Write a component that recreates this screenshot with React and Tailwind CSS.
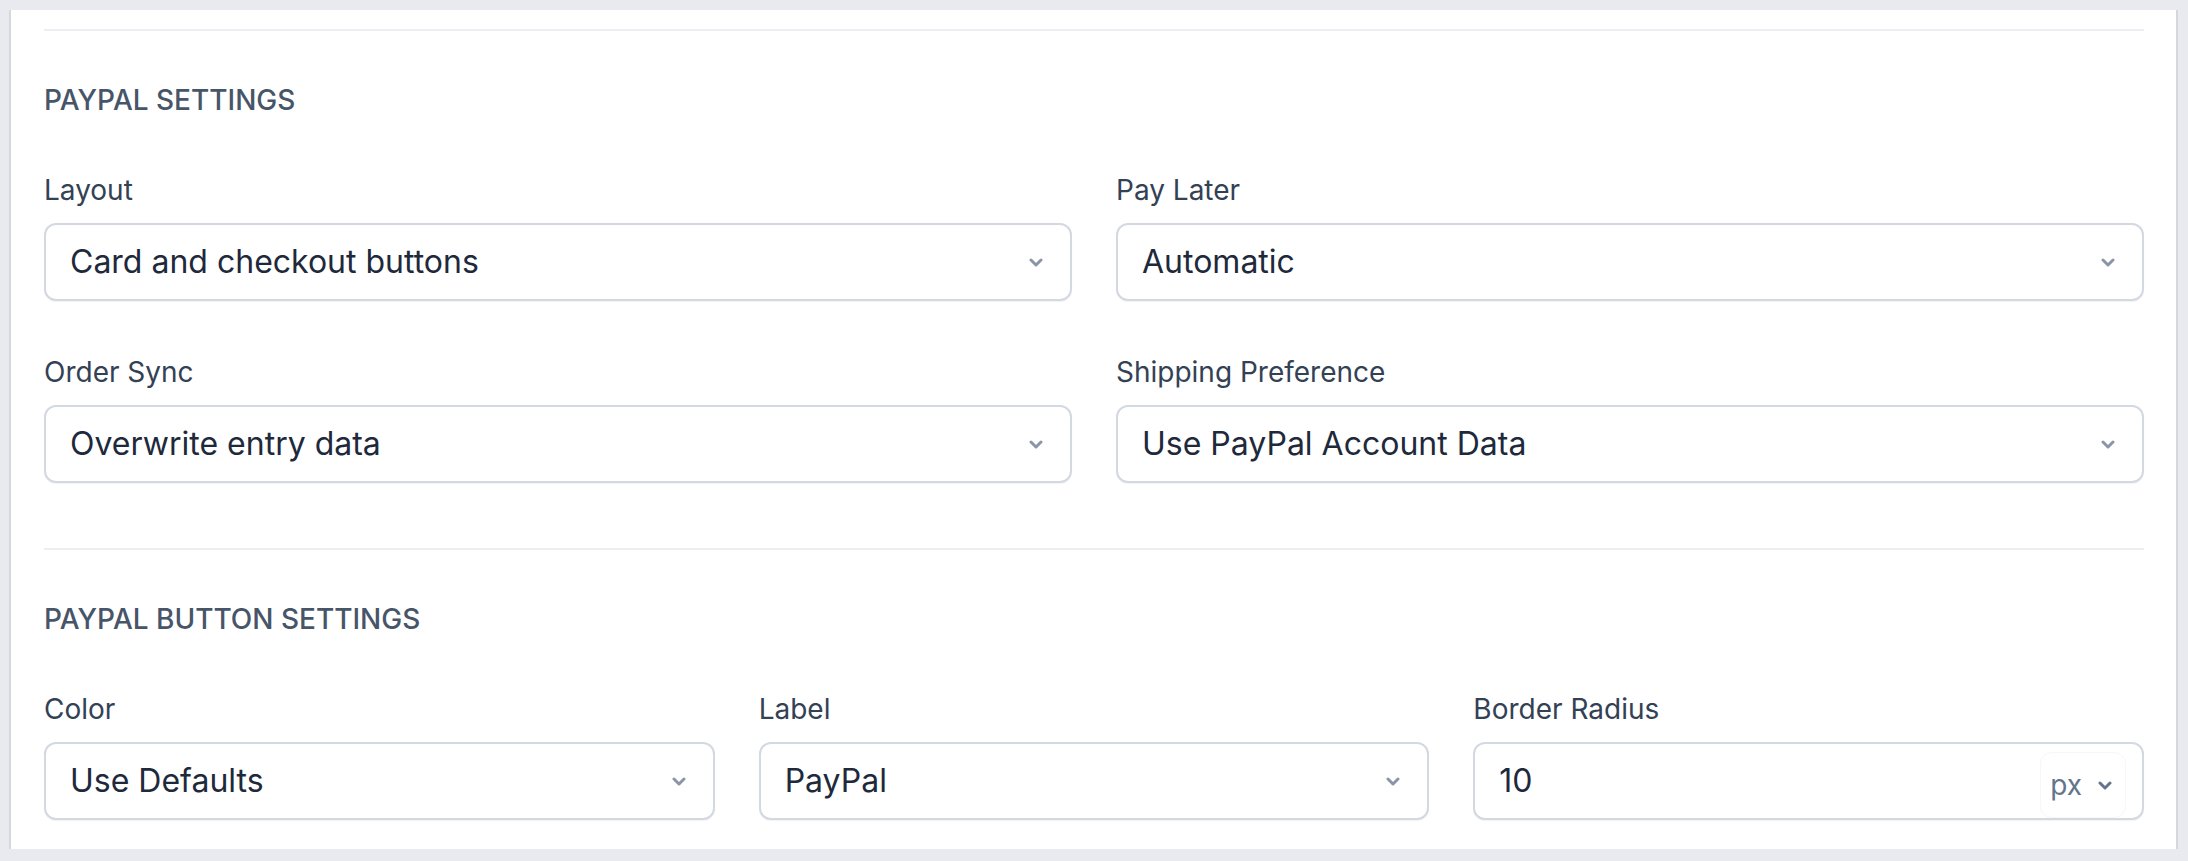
import React from "react";

// Small chevron used by every select
const Chevron = ({ className = "text-[#8b95a7]" }) => (
  <svg
    className={`w-[14px] h-[9px] shrink-0 ${className}`}
    viewBox="0 0 14 9"
    fill="none"
    stroke="currentColor"
    strokeWidth={3}
    strokeLinecap="round"
    strokeLinejoin="round"
  >
    <path d="M2 2l5 5 5-5" />
  </svg>
);

const Field = ({ label, value, unit }) => (
  <div className="flex flex-col">
    <label className="text-[28px] leading-[40px] text-[#334155]">{label}</label>
    <div className="mt-[13px] h-[78px] flex items-center rounded-[12px] border-2 border-[#d3d8e1] bg-white pl-[24px] pr-[27px] shadow-[0_1px_1px_rgba(15,23,42,0.05)]">
      <span className="flex-1 text-[32px] text-[#1e293b] truncate">{value}</span>
      {unit ? (
        <div className="self-end -mr-[11px] h-[66px] flex items-center gap-[16px] rounded-[12px] border border-[#f6f7f9] pl-[9px] pr-[13px]">
          <span className="text-[28px] text-[#64748b]">{unit}</span>
          <Chevron className="text-[#64748b]" />
        </div>
      ) : (
        <Chevron />
      )}
    </div>
  </div>
);

const SectionTitle = ({ children }) => (
  <h2 className="mt-[49px] text-[28px] leading-[40px] font-medium text-[#475569] uppercase">
    {children}
  </h2>
);

export default function App() {
  return (
    <div
      className="min-h-screen bg-[#e9eaef] pt-[10px] pb-[10px] pl-[9px] pr-[10px]"
      style={{ fontFamily: "Inter, 'Noto Sans', sans-serif" }}
    >
      <div className="bg-white border-x-2 border-[#d5d7de] pl-[33px] pr-[32px] pt-[19px] pb-[29px]">
        {/* PayPal settings */}
        <div className="h-[2px] bg-[#eceef2]" />
        <SectionTitle>PayPal Settings</SectionTitle>
        <div className="mt-[50px] grid grid-cols-2 gap-x-[44px] gap-y-[51px]">
          <Field label="Layout" value="Card and checkout buttons" />
          <Field label="Pay Later" value="Automatic" />
          <Field label="Order Sync" value="Overwrite entry data" />
          <Field label="Shipping Preference" value="Use PayPal Account Data" />
        </div>

        {/* PayPal button settings */}
        <div className="mt-[65px] h-[2px] bg-[#eceef2]" />
        <SectionTitle>PayPal Button Settings</SectionTitle>
        <div className="mt-[50px] grid grid-cols-3 gap-x-[44px]">
          <Field label="Color" value="Use Defaults" />
          <Field label="Label" value="PayPal" />
          <Field label="Border Radius" value="10" unit="px" />
        </div>
      </div>
    </div>
  );
}
